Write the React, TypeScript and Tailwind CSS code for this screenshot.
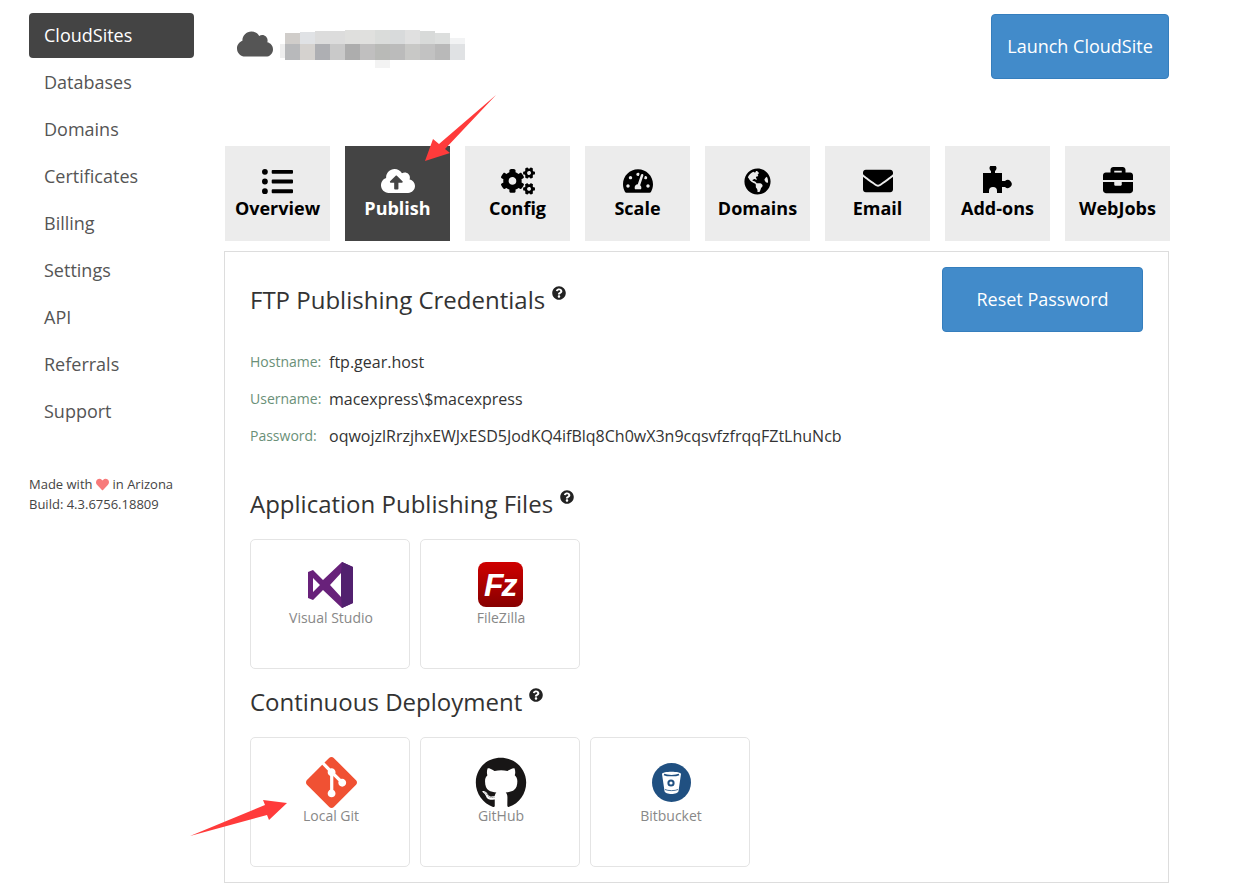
import { ReactNode } from "react";
import {
  FaBriefcase,
  FaCloud,
  FaCloudUploadAlt,
  FaCogs,
  FaEnvelope,
  FaGithub,
  FaGlobeAmericas,
  FaHeart,
  FaListUl,
  FaQuestionCircle,
  FaTachometerAlt,
} from "react-icons/fa";
import { SiGit } from "react-icons/si";

const navItems = [
  "CloudSites",
  "Databases",
  "Domains",
  "Certificates",
  "Billing",
  "Settings",
  "API",
  "Referrals",
  "Support",
];

function PuzzleIcon() {
  return (
    <svg width="29" height="27" viewBox="0 0 29 27" fill="currentColor" className="-mt-[3px]">
      <path d="M0 7H8V5A3.5 3.5 0 1 1 12 5V7H19V15H22A4 4 0 1 1 22 21H19V27H14V25A4 4 0 0 0 6 25V27H0Z" />
    </svg>
  );
}

const tabs = [
  { label: "Overview", icon: <FaListUl size={31} /> },
  { label: "Publish", icon: <FaCloudUploadAlt size={34} />, active: true },
  { label: "Config", icon: <FaCogs size={34} /> },
  { label: "Scale", icon: <FaTachometerAlt size={30} /> },
  { label: "Domains", icon: <FaGlobeAmericas size={27} /> },
  { label: "Email", icon: <FaEnvelope size={30} /> },
  { label: "Add-ons", icon: <PuzzleIcon /> },
  { label: "WebJobs", icon: <FaBriefcase size={30} className="-mt-[2px]" /> },
];

const topRow = [
  ["#d0cdca", 33],
  ["#e0e2e5", 32],
  ["#dcdcdc", 31],
  ["#dcdcdc", 31],
  ["#dfdfdd", 30],
  ["#e0e0de", 30],
  ["#dadcda", 30],
  ["#d8dadb", 30],
  ["#e0e0e0", 30],
  ["#d8dad9", 31],
  ["#dcdedd", 33],
  ["#f2f3f4", 38],
] as const;

const bottomRow = [
  "#b8b9bb",
  "#d5d2cf",
  "#aeafb3",
  "#c9c9c9",
  "#adadad",
  "#c0bfbf",
  "#b9bab7",
  "#bbbbbb",
  "#c8c8c6",
  "#c2c2c2",
  "#b9b9b9",
  "#e0e2e4",
];

function BlurredName() {
  return (
    <svg width="190" height="40" viewBox="278 30 190 40" className="ml-[5px] mt-[4px]">
      <rect x="280" y="44" width="5" height="14" fill="#eeeeee" />
      {topRow.map(([color, y], i) => (
        <rect key={i} x={285 + i * 15} y={y} width="15" height={44 - y} fill={color} />
      ))}
      {bottomRow.map((color, i) => (
        <rect key={i} x={285 + i * 15} y="44" width="15" height="16" fill={color} />
      ))}
      <rect x="375" y="60" width="15" height="8" fill="#f3f3f3" />
    </svg>
  );
}

function VisualStudioLogo() {
  return (
    <svg width="46" height="46" viewBox="0 0 46 46">
      <path
        fillRule="evenodd"
        fill="#68217a"
        d="M0 10L5 8L15 18L34 0L45 5V41L34 46L15 28L5 38L0 36ZM5 16V30L12 23ZM33 11L22 23L33 35Z"
      />
      <path fill="#52206f" d="M34 0L45 5V41L34 46L33 35V11Z" />
    </svg>
  );
}

function FileZillaLogo() {
  return (
    <svg width="46" height="46" viewBox="0 0 46 46">
      <defs>
        <linearGradient id="fz" x1="0" y1="0" x2="0" y2="1">
          <stop offset="0" stopColor="#cf0000" />
          <stop offset="1" stopColor="#870000" />
        </linearGradient>
      </defs>
      <rect width="45" height="45" rx="8" fill="url(#fz)" />
      <text
        x="6"
        y="34"
        fill="#ffffff"
        fontSize="32"
        letterSpacing="-2"
        fontWeight="700"
        fontStyle="italic"
        fontFamily="Liberation Sans, sans-serif"
      >
        Fz
      </text>
    </svg>
  );
}

function BitbucketLogo() {
  return (
    <svg width="39" height="39" viewBox="0 0 39 39">
      <circle cx="19.5" cy="19.5" r="19.5" fill="#205081" />
      <path fill="#ffffff" d="M10 11C10 8 29 8 29 11L26.5 28C26 32 13 32 12.5 28Z" />
      <path fill="none" stroke="#205081" strokeWidth="1.4" d="M12 11.5C15 13 24 13 27 11.5" />
      <path fill="none" stroke="#205081" strokeWidth="0.8" d="M13 26.5C16 28 23 28 26 26.5" />
      <circle cx="19" cy="20" r="3.6" fill="#205081" />
      <circle cx="19" cy="20" r="1.6" fill="#ffffff" />
    </svg>
  );
}

function SectionTitle({ children }: { children: ReactNode }) {
  return (
    <div className="flex items-start h-[36px] text-[24px] leading-[36px] text-[#333]">
      <span>{children}</span>
      <FaQuestionCircle size={14} className="ml-[7px] mt-[4px] text-[#222]" />
    </div>
  );
}

function CredentialRow({ label, value }: { label: string; value: string }) {
  return (
    <div className="flex items-center h-[37px]">
      <span className="w-[79px] text-[14px] text-[#6a9078]">{label}</span>
      <span className="text-[16px] text-[#333]">{value}</span>
    </div>
  );
}

function PublishCard({ label, logo }: { label: string; logo: ReactNode }) {
  return (
    <div className="w-[160px] h-[130px] rounded-[5px] border border-[#e4e4e4] flex flex-col items-center pt-[21px] pl-[2px] box-border">
      <div className="h-[47px] flex items-center justify-center">{logo}</div>
      <div className="text-[14px] leading-[20px] text-[#888]">{label}</div>
    </div>
  );
}

export default function App() {
  return (
    <div className="relative flex min-h-screen bg-white font-['Open_Sans',sans-serif] overflow-hidden">
      <aside className="w-[224px] shrink-0 pl-[29px] pt-[13px]">
        <nav className="flex flex-col gap-[2px] w-[165px]">
          {navItems.map((item, i) => (
            <a
              key={item}
              className={
                i === 0
                  ? "h-[45px] flex items-center px-[15px] rounded-[4px] text-[18px] bg-[#444] text-white"
                  : "h-[45px] flex items-center px-[15px] rounded-[4px] text-[18px] text-[#555]"
              }
            >
              {item}
            </a>
          ))}
        </nav>
        <div className="mt-[40px] text-[13px] leading-[20px] text-[#444]">
          <div className="flex items-center">
            Made with
            <FaHeart size={13} className="ml-[3px] mr-[4px] text-[#f77a7a]" />
            in Arizona
          </div>
          <div>Build: 4.3.6756.18809</div>
        </div>
      </aside>

      <main className="w-[946px] shrink-0">
        <header className="flex justify-between items-start pt-[14px] pl-[13px] pr-px">
          <div className="flex items-start text-[#555] pt-[12px]">
            <FaCloud size={36} />
            <BlurredName />
          </div>
          <button className="w-[178px] h-[65px] rounded-[4px] border border-[#357ebd] bg-[#428bca] text-[18px] text-white">
            Launch CloudSite
          </button>
        </header>

        <div className="flex gap-[15px] ml-px mt-[67px]">
          {tabs.map((tab) => (
            <div
              key={tab.label}
              className={
                tab.active
                  ? "w-[105px] h-[95px] flex flex-col items-center bg-[#444] text-white"
                  : "w-[105px] h-[95px] flex flex-col items-center bg-[#ececec] text-black"
              }
            >
              <div className="h-[28px] mt-[21px] flex items-center justify-center">{tab.icon}</div>
              <div className="text-[18px] leading-[26px] font-bold">{tab.label}</div>
            </div>
          ))}
        </div>

        <section className="mt-[10px] w-[945px] border border-[#ddd] pl-[25px] pr-[25px] pt-[15px] pb-[15px] box-border">
          <div className="flex justify-between items-center">
            <SectionTitle>FTP Publishing Credentials</SectionTitle>
            <button className="w-[201px] h-[65px] rounded-[4px] border border-[#357ebd] bg-[#428bca] text-[18px] text-white">
              Reset Password
            </button>
          </div>

          <div className="mt-[11px]">
            <CredentialRow label="Hostname:" value="ftp.gear.host" />
            <CredentialRow label="Username:" value="macexpress\$macexpress" />
            <CredentialRow
              label="Password:"
              value="oqwojzlRrzjhxEWJxESD5JodKQ4ifBlq8Ch0wX3n9cqsvfzfrqqFZtLhuNcb"
            />
          </div>

          <div className="mt-[32px]">
            <SectionTitle>Application Publishing Files</SectionTitle>
          </div>
          <div className="flex gap-[10px] mt-[17px]">
            <PublishCard label="Visual Studio" logo={<VisualStudioLogo />} />
            <PublishCard label="FileZilla" logo={<FileZillaLogo />} />
          </div>

          <div className="mt-[15px]">
            <SectionTitle>Continuous Deployment</SectionTitle>
          </div>
          <div className="flex gap-[10px] mt-[17px]">
            <PublishCard label="Local Git" logo={<SiGit size={51} className="text-[#f05133]" />} />
            <PublishCard label="GitHub" logo={<FaGithub size={52} className="text-[#181616]" />} />
            <PublishCard label="Bitbucket" logo={<BitbucketLogo />} />
          </div>
        </section>
      </main>

      {/* red annotation arrows drawn over the screenshot */}
      <svg className="absolute left-0 top-0 pointer-events-none" width="1235" height="891">
        <polygon fill="#ff3b3b" points="496,95 445,149 450,153 425,161 433,139 439,144" />
        <polygon fill="#ff3b3b" points="190,836 265,805 263,800 287,803 269,820 267,815" />
      </svg>
    </div>
  );
}
